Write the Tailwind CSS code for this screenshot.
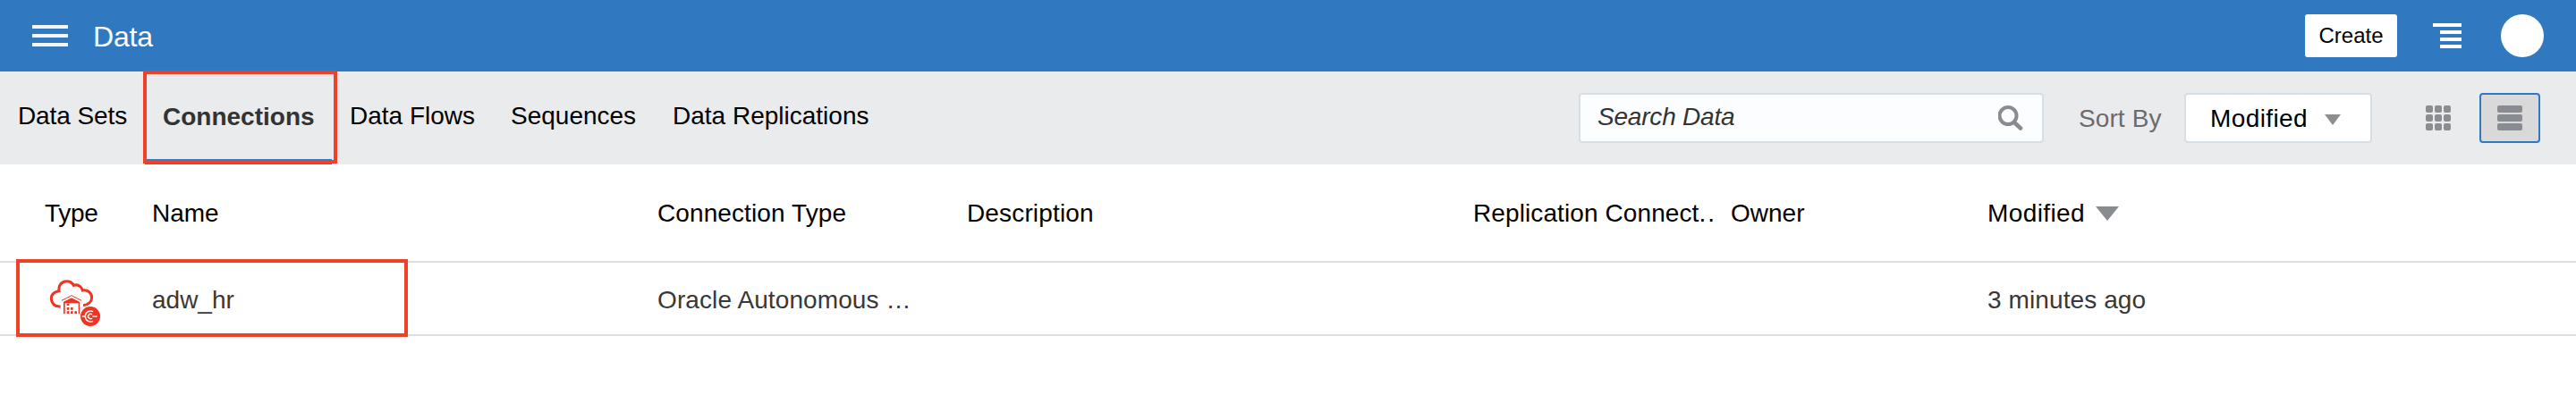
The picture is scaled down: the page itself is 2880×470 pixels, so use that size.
<!DOCTYPE html>
<html lang="en">
<head>
<meta charset="utf-8">
<title>Data</title>
<script src="https://cdn.jsdelivr.net/npm/@tailwindcss/browser@4"></script>
</head>
<body class="relative h-[470px] w-[2880px] overflow-hidden bg-white font-['Liberation_Sans',Arial,sans-serif] text-[28px] leading-8 text-black">
  <header class="flex h-20 items-center bg-[#3079c1] pl-9 pr-9">
    <svg class="h-6 w-10" viewBox="0 0 40 24" fill="#f5f5f5"><path d="M0 0h40v4H0zM0 10h40v4H0zM0 20h40v4H0z"/></svg>
    <h1 class="ml-7 pt-0.5 text-[32px] leading-9 tracking-[-0.2px] text-white">Data</h1>
    <button class="ml-auto h-12 w-[103px] rounded-[3px] bg-white text-[24px] leading-[48px]">Create</button>
    <svg class="ml-10 h-7 w-8" viewBox="0 0 32 28" fill="#fff"><path d="M0 0h32v4H0zM8 8h24v4H8zM8 16h24v4H8zM8 24h24v4H8z"/></svg>
    <div class="ml-11 size-12 rounded-full bg-white"></div>
  </header>

  <div class="flex h-[104px] items-center bg-[#eaebed] pr-10">
    <nav class="flex h-full pl-5 leading-[100px]">
      <a class="w-[142px] tracking-[-0.1px]">Data Sets</a>
      <a class="h-full w-[209px] border-b-[6px] border-[#3079c1] pl-5 font-bold leading-[102px] text-[#333]">Connections</a>
      <a class="w-[180px] pl-5">Data Flows</a>
      <a class="w-[181px] pl-5">Sequences</a>
      <a class="pl-5">Data Replications</a>
    </nav>
    <div class="ml-auto flex h-14 w-[520px] items-center justify-between rounded border-2 border-[#d6dfe6] bg-[#fcfdfe] pl-[19px] pr-[21px]">
      <span class="pb-[3px] italic tracking-[-0.2px] text-[#333]">Search Data</span>
      <svg class="h-7 w-7" viewBox="0 0 28 28" fill="none" stroke="#888b90" stroke-width="4"><circle cx="11" cy="11.5" r="9.5"/><path d="M18 19l7 6.5" stroke-width="4.5" stroke-linecap="round"/></svg>
    </div>
    <span class="ml-[39px] w-[118px] pt-px tracking-[0.1px] text-[#6b6b6b]">Sort By</span>
    <div class="flex h-14 w-[210px] items-center rounded border-2 border-[#d6dfe6] bg-white pl-[27px]">
      <span class="w-[128px] pt-px tracking-[0.4px]">Modified</span>
      <svg class="mt-1 h-3 w-[18px]" viewBox="0 0 18 12" fill="#8b8d91"><path d="M0 0h18L9 12z"/></svg>
    </div>
    <svg class="ml-[60px] size-7" viewBox="0 0 28 28" fill="#8b8d91">
      <rect width="8" height="8" rx="2"/><rect x="10" width="8" height="8" rx="2"/><rect x="20" width="8" height="8" rx="2"/>
      <rect y="10" width="8" height="8" rx="2"/><rect x="10" y="10" width="8" height="8" rx="2"/><rect x="20" y="10" width="8" height="8" rx="2"/>
      <rect y="20" width="8" height="8" rx="2"/><rect x="10" y="20" width="8" height="8" rx="2"/><rect x="20" y="20" width="8" height="8" rx="2"/>
    </svg>
    <div class="ml-8 flex h-14 w-17 items-center justify-center rounded border-2 border-[#3079c1] bg-[#d9d9d9]">
      <svg class="size-7" viewBox="0 0 28 28" fill="#888b90"><rect width="28" height="8" rx="2"/><rect y="10" width="28" height="8" rx="2"/><rect y="20" width="28" height="8" rx="2"/></svg>
    </div>
  </div>

  <main>
    <div class="grid h-[110px] grid-cols-[120px_565px_346px_566px_288px_287px_1fr] items-center border-b-2 border-[#d9dfe3] pl-[50px] pt-0.5">
      <span class="tracking-[-0.3px]">Type</span><span>Name</span><span class="tracking-[0.1px]">Connection Type</span><span class="tracking-[0.15px]">Description</span>
      <span class="tracking-[0.1px]">Replication Connect<span class="tracking-[2px]">..</span></span><span>Owner</span>
      <span class="flex items-center gap-3"><span class="tracking-[0.4px]">Modified</span><svg class="h-4 w-[26px]" viewBox="0 0 26 16" fill="#888b90"><path d="M0 0h26L13 16z"/></svg></span>
    </div>
    <div class="grid h-[82px] grid-cols-[120px_565px_346px_566px_288px_287px_1fr] items-center border-b-2 border-[#d9dfe3] pl-[50px] pt-1 text-[#383838]">
      <svg class="ml-1.5 mt-1.5 h-[52px] w-14" viewBox="48 38 168 156" fill="#ee3524">
        <path d="M83 128C65 130 52 118 52 101C52 88 62 77 78 76C75 57 87 43 104 43C114 43 122 48 127 57C142 52 154 62 157 74C176 71 188 84 188 99C188 111 177 122 159 124" fill="none" stroke="#ee3524" stroke-width="9"/>
        <path d="M87 108l33-17 33 17" fill="none" stroke="#ee3524" stroke-width="3"/>
        <path d="M93 112l27-13 27 13v41h-4v-36H98v36h-5z"/>
        <path d="M104 118h8v7h-8zM104 131h8v8h-8zM117 131h8v8h-8zM104 144h8v8h-8zM117 144h8v8h-8zM130 144h8v8h-8z"/>
        <circle cx="183" cy="161" r="33"/>
        <path d="M192 145a18 18 0 1 0 0 32M155 161h10M206 161h-16M189 155a8 8 0 1 0 0 12" fill="none" stroke="#fff" stroke-width="4.5"/>
      </svg>
      <span>adw_hr</span><span class="tracking-[0.1px]">Oracle Autonomous …</span><span></span><span></span><span></span><span class="tracking-[0.1px]">3 minutes ago</span>
    </div>
  </main>

  <!-- Highlight frames over the active tab and the first row -->
  <div class="absolute left-[160px] top-[79px] h-[104px] w-[217px] border-4 border-[#ee4128]"></div>
  <div class="absolute left-[18px] top-[290px] h-[87px] w-[438px] border-4 border-[#ee4128]"></div>
</body>
</html>
